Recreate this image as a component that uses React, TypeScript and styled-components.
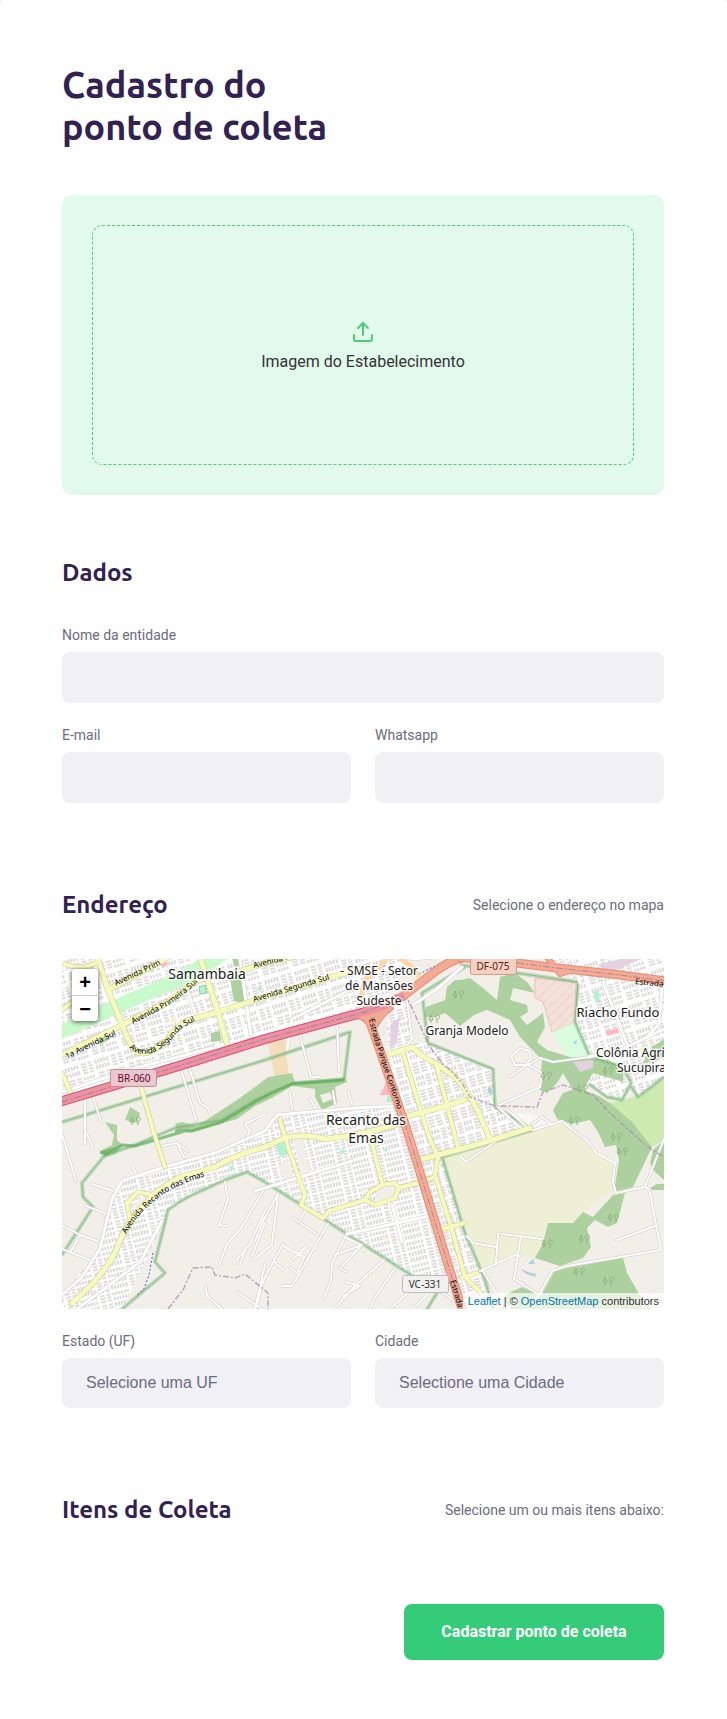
import React from 'react';
import styled, { createGlobalStyle } from 'styled-components';
import { Upload } from 'lucide-react';

const GlobalStyle = createGlobalStyle`
  * { box-sizing: border-box; margin: 0; padding: 0; }
  body {
    background: #f0f0f5;
    color: #6c6c80;
    font-family: Roboto, "Liberation Sans", sans-serif;
    font-size: 16px;
    -webkit-font-smoothing: antialiased;
  }
`;

const Form = styled.form`
  display: flex;
  flex-direction: column;
  background: #fff;
  border-radius: 4px 4px 0 0;
  padding: 64px 63px 59px 62px;
`;

const headingFont = 'Ubuntu, "Noto Sans", "Open Sans", sans-serif';

const Title = styled.h1`
  font: 700 36px/42px ${headingFont};
  color: #322153;
`;

const DropArea = styled.label`
  display: flex;
  height: 300px;
  margin-top: 47px;
  padding: 30px;
  background: #e1faec;
  border-radius: 10px;
  cursor: pointer;
`;

const DropTarget = styled.span`
  flex: 1;
  display: flex;
  flex-direction: column;
  align-items: center;
  justify-content: center;
  gap: 8px;
  border: 1px dashed #4ecb79;
  border-radius: 10px;
  color: #333;
  line-height: 19px;
  svg { color: #4ecb79; }
`;

const FileInput = styled.input`
  position: absolute;
  width: 1px;
  height: 1px;
  opacity: 0;
`;

const Section = styled.fieldset<{ $first?: boolean }>`
  min-width: 0;
  border: 0;
  margin-top: ${(p) => (p.$first ? 64 : 88)}px;
  display: flex;
  flex-direction: column;
  gap: 24px;
`;

const SectionHeader = styled.div`
  display: flex;
  align-items: center;
  justify-content: space-between;
  margin-bottom: 16px;
  font-size: 14px;
  line-height: 28px;
`;

const SectionTitle = styled.h2`
  font: 700 24px/28px ${headingFont};
  color: #322153;
`;

const FieldRow = styled.div`
  display: grid;
  grid-template-columns: 1fr 1fr;
  gap: 24px;
`;

const Field = styled.div`
  display: flex;
  flex-direction: column;
  gap: 8px;
  label { font-size: 14px; line-height: 17px; }
`;

const Input = styled.input`
  width: 100%;
  height: 51px;
  border: 0;
  border-radius: 8px;
  padding: 0 24px;
  background: #f0f0f5;
  color: #6c6c80;
  font: 400 16px/20px Roboto, sans-serif;
`;

const Select = styled.select`
  width: 100%;
  height: 50px;
  appearance: none;
  border: 0;
  border-radius: 8px;
  padding: 0 24px;
  background: #f0f0f5;
  color: #6c6c80;
  font: 400 16px/20px "Liberation Sans", Arial, sans-serif;
`;

const Submit = styled.button`
  align-self: flex-end;
  width: 260px;
  height: 56px;
  margin-top: 64px;
  border: 0;
  border-radius: 8px;
  background: #34cb79;
  color: #fff;
  font: 700 16px/20px Roboto, sans-serif;
  cursor: pointer;
`;

const MapFrame = styled.div`
  position: relative;
  height: 350px;
  overflow: hidden;
  border-radius: 8px;
  background: #f2efe9;
`;

const MapSvg = styled.svg`
  display: block;
  width: 100%;
  height: 100%;
  font-family: "Noto Sans", "Open Sans", sans-serif;
`;

const PlaceLabels = styled.g`
  fill: #222;
  paint-order: stroke;
  stroke: rgba(255, 255, 255, 0.75);
  stroke-width: 3px;
  stroke-linejoin: round;
`;

const StreetLabels = styled.g`
  fill: #000;
  font-size: 8px;
`;

const ZoomControl = styled.div`
  position: absolute;
  top: 10px;
  left: 10px;
  width: 26px;
  border-radius: 4px;
  box-shadow: 0 1px 5px rgba(0, 0, 0, 0.65);
  background: #fff;
  overflow: hidden;
`;

const ZoomButton = styled.button`
  display: block;
  width: 26px;
  height: 26px;
  border: 0;
  background: #fff;
  color: #000;
  font: 700 20px/26px "Liberation Sans", Arial, sans-serif;
  cursor: pointer;
  & + & { border-top: 1px solid #ccc; }
`;

const Attribution = styled.div`
  position: absolute;
  right: 0;
  bottom: 0;
  padding: 0 5px;
  background: rgba(255, 255, 255, 0.7);
  color: #333;
  font: 11px/16px "Liberation Sans", Arial, sans-serif;
  a { color: #0078a8; text-decoration: none; }
`;

type Line = { d: string; w?: number };

const yellowRoads: Line[] = [
  { d: 'M35 -2L45 28 61 68Q67 86 75 93 82 96 90 92L103 83Q114 68 124 62L156 53 203 38 276 16 305 8' },
  { d: 'M0 96L60 66 96 48Q112 40 126 28L143 18' },
  { d: 'M46 31L96 4 110 -4' },
  { d: 'M138 -2L156 53 166 88' },
  { d: 'M0 4Q20 12 36 3', w: 4 },
  { d: 'M0 51L14 40', w: 4 },
  { d: 'M0 114L9 135', w: 4 },
  { d: 'M173 14L203 4 236 -3' },
  { d: 'M79 128L91 171 103 208', w: 4 },
  { d: 'M10 344Q40 318 53 294 60 272 76 253L93 234 116 219Q140 212 153 208 170 197 203 188L223 179Q243 174 263 180 285 178 306 173L333 166 346 157 373 150 403 141', w: 5 },
  { d: 'M68 261L65 244 76 233 91 236', w: 4 },
  { d: 'M218 161L226 188 243 236 239 246 261 259 267 252 303 241 308 233 320 226 332 224 337 229 333 239 313 246 303 241', w: 4 },
  { d: 'M336 229L360 223 373 218M308 176L320 224', w: 4 },
  { d: 'M325 96L350 88Q360 98 373 104L393 118Q406 132 416 152L428 180', w: 5 },
  { d: 'M341 94L366 175 376 198 373 216 390 271 403 318 418 333', w: 4 },
  { d: 'M356 201L403 189 430 181 468 169', w: 5 },
  { d: 'M375 108L396 188M378 271L402 264M400 319L415 314', w: 4 },
];

const whiteRoads: Line[] = [
  { d: 'M23 137L23 185M31 137L39 163M119 110L129 144 134 161M127 107L138 144 146 149 149 157' },
  { d: 'M237 73L249 118 257 118M275 60L277 112M183 181L188 172 183 165 203 155' },
  { d: 'M228 134L230 150M248 140L254 150M271 132L273 145M286 132L290 145' },
  { d: 'M0 175L14 222M23 171L31 188M100 187L115 184 122 198M115 184L126 192M70 206L75 217M30 225L51 232' },
  { d: 'M0 266L18 276 35 282M24 247L45 255 43 262M0 290L30 302M18 276L9 292' },
  { d: 'M163 223L166 240 157 266 164 267M202 230L180 268 165 285 157 307M203 252L188 285 172 304M184 289L178 305M203 264L190 297' },
  { d: 'M144 328L145 337 160 350M175 333L200 350M203 305L193 350' },
  { d: 'M216 235L202 260 193 282M216 235L210 285 193 300M231 259L256 276M266 265L230 327 220 327M246 246L238 261' },
  { d: 'M221 285L202 320 194 348M221 287L242 298 236 312M213 303L221 311M231 300L244 288M228 309L238 316' },
  { d: 'M284 276L270 304 269 321 262 340M284 279L300 286 280 307M300 286L273 296M278 309L284 313' },
  { d: 'M322 301L293 327 275 347M284 323L298 327 281 337M333 309L312 340 308 350M348 332L330 348M355 346L372 328 400 347' },
  { d: 'M466 106L478 99 491 103 527 98M466 106L453 106 449 98 458 89 467 92 469 100 462 108 448 118M435 147L478 128 480 114 466 106' },
  { d: 'M435 147L457 168 471 171 500 162 512 172 526 182 534 194 553 204 551 222 554 234 583 228 602 180' },
  { d: 'M583 228L587 230 599 291 505 307 490 312 472 345M555 281L593 267M440 275L480 280M459 277L452 320 476 335' },
  { d: 'M398 197L404 203 436 181M405 277L411 284 434 288M436 275L434 303M418 312L453 296 458 297M421 312L433 332 448 350M591 332L581 348' },
  { d: 'M345 42L350 80 340 92M470 165L480 158 490 166M445 150L468 171' },
];

const widePaved: Line[] = [
  { d: 'M0 336L20 318 38 290 50 240 60 222 103 208 153 194 203 172 215 156 293 149 335 147' },
  { d: 'M15 350L78 303 100 262 M0 133L70 110 150 89' },
  { d: 'M350 0L385 -3M351 46L375 30 400 8M485 0L520 20M510 0L518 24M541 23L570 98M600 30L597 65 585 78' },
  { d: 'M526 98L560 90 602 70M330 245L340 283M193 232L290 202M285 275L372 256' },
  { d: 'M225 90L230 60 290 30M178 0L190 84M125 30L136 62' },
];

const urban: { d: string; fill: string }[] = [
  { d: 'M0 0H345L325 42 300 50 0 140Z', fill: 'url(#blocksA)' },
  { d: 'M325 50L345 38 350 84 366 84 433 112 433 148 471 171 380 198 430 350H398L346 181 326 98Z', fill: 'url(#blocksB)' },
  { d: 'M0 336L38 290 50 240 60 222 103 208 153 194 203 171 215 156 293 148 336 144 392 330 375 334 203 223 185 213 163 221 130 236 106 251 96 276 60 350H0Z', fill: 'url(#blocksC)' },
  { d: 'M485 0H602V118L578 138 570 125 560 140 545 138 527 123 526 117 560 116 560 108 530 98 513 63 518 26Z', fill: 'url(#blocksA)' },
  { d: 'M452 154L470 155 498 166 470 170Z', fill: '#f8f7f4' },
];

const woods = [
  'M63 161L68 148 78 154 75 164Z',
  'M43 163L55 166 55 181 61 186 54 195 42 199 38 192 50 186 52 176Z',
  'M113 165L120 163 135 167 175 141 193 128 206 118 230 114 233 123 283 118 285 123 273 128 275 144 260 151 253 138 253 130 230 127 210 139 193 147 175 160 150 167 130 173 115 171ZM258 136L268 133 271 140 261 144Z',
  'M398 21L408 19 421 29 435 41 438 18 453 14 465 23 473 34 451 29 448 41 465 46 466 53 458 58 465 66 481 54 483 68 475 83 485 91 508 98 545 101 561 108 561 123 531 114 525 124 521 134 511 131 501 114 495 124 485 134 478 131 480 101 458 78 448 61 425 51 412 56 398 67 390 60 383 54 374 58 363 58 364 48 383 41 385 28 393 21Z',
  'M491 151L501 134 515 129 535 136 548 144 571 164 590 188 571 228 552 233 557 201 554 186 543 188 535 171 528 161 510 165 495 160Z',
  'M486 264L511 264 521 253 531 258 551 236 563 234 555 264 546 268 533 261 525 269 529 288 521 299 498 307 473 299 481 284Z',
  'M493 311L561 299 565 314 580 340 590 350H468L480 335Z',
  'M443 336L460 328 475 335 478 350H440Z',
  'M591 191L602 181V221L593 213 588 204ZM588 229L595 225H602V231H590Z',
  'M590 88L602 80V98L580 105Z',
];

const reserveLines = [
  'M0 163L203 101 288 73 282 121 230 124 193 141 160 161 113 169 73 186 43 196 20 224 21 238 31 248 0 296',
  'M60 350L103 314 93 303 106 251Q116 243 130 236L163 221 185 213 203 223 260 259 346 314 376 332 364 352',
  'M403 8L360 34 366 84 431 110 433 148 471 171 380 198 403 274 423 321 431 350',
  'M398 6L455 14 516 23 513 63 528 98 560 108 570 125',
  'M527 125L545 138 560 141 568 126 576 138 602 118',
];

const boundaries = [
  'M343 34L368 88 380 104Q398 118 408 138L433 147 475 148 481 133 501 126 531 136 548 154 578 181 590 191 602 198',
  'M106 350L121 331 131 309 150 308 153 316 173 319 183 315 206 334V350',
];

const trees = [[484, 285], [521, 280], [550, 259], [516, 313], [545, 322], [511, 162], [553, 178], [559, 193], [483, 117], [519, 130], [545, 112], [395, 36], [371, 60], [72, 162]];

const Roads = ({ lines, width, casing, fill }: { lines: Line[]; width: number; casing: string; fill: string }) => (
  <g fill="none" strokeLinejoin="round" strokeLinecap="round">
    {lines.map((l) => <path key={l.d} d={l.d} stroke={casing} strokeWidth={(l.w ?? width) + 1} />)}
    {lines.map((l) => <path key={l.d} d={l.d} stroke={fill} strokeWidth={l.w ?? width} />)}
  </g>
);

const StreetMap = () => (
  <MapSvg viewBox="0 0 602 350" preserveAspectRatio="xMidYMid slice" role="img" aria-label="Mapa de Recanto das Emas">
    <defs>
      <pattern id="blocksA" width="31" height="26" patternUnits="userSpaceOnUse" patternTransform="rotate(-17)">
        <path fill="#fff" d="M0 0h31v26H0z" />
        <path stroke="#bebcb8" strokeWidth="1.1" fill="none" d="M2 2v4M5 2v4M8 2v4M11 2v4M14 2v4M2 8v4M5 8v4M8 8v4M11 8v4M14 8v4M18 3h5M18 6h5M18 9h5M18 12h5M25 3h4M25 6h4M25 9h4M25 12h4M2 16h6M2 19h6M2 22h6M10 16h5M10 19h5M10 22h5M18 16v3M21 16v3M24 16v3M27 16v3M18 21v3M21 21v3M24 21v3M27 21v3" />
      </pattern>
      <pattern id="blocksB" width="17" height="28" patternUnits="userSpaceOnUse" patternTransform="rotate(-16)">
        <path fill="#fff" d="M0 0h17v28H0z" />
        <path stroke="#bebcb8" strokeWidth="1.1" d="M1 2h6M1 5h6M1 8h6M1 11h6M9 2h6M9 5h6M9 8h6M9 11h6M2 15v4M5 15v4M8 15v4M2 21v4M5 21v4M8 21v4M11 16h5M11 19h5M11 22h5M11 25h5" />
      </pattern>
      <pattern id="blocksC" width="33" height="23" patternUnits="userSpaceOnUse" patternTransform="rotate(-14)">
        <path fill="#fff" d="M0 0h33v23H0z" />
        <path stroke="#bebcb8" strokeWidth="1.1" d="M2 1v4M5 1v4M8 1v4M11 1v4M14 1v4M17 1v4M2 7v4M5 7v4M8 7v4M11 7v4M14 7v4M17 7v4M2 14v3M5 14v3M8 14v3M11 14v3M14 14v3M17 14v3M2 19v3M5 19v3M8 19v3M11 19v3M14 19v3M17 19v3M21 2h5M21 5h5M21 8h5M21 11h5M21 15h5M21 18h5M21 21h5M28 2h4M28 5h4M28 8h4M28 11h4M28 15h4M28 18h4M28 21h4" />
      </pattern>
      <pattern id="military" width="7" height="7" patternUnits="userSpaceOnUse" patternTransform="rotate(45)">
        <path fill="#f2e0d9" d="M0 0h7v7H0z" /><path stroke="#f3c0ba" strokeWidth="1" d="M0 0v7" />
      </pattern>
      <path id="lblPrimeiraTop" d="M54 27L96 7 120 -6" />
      <path id="lblPrimeira" d="M71 65L98 51Q114 43 136 23" />
      <path id="lblUmA" d="M5 100L60 73" />
      <path id="lblSegunda" d="M67 89Q76 97 90 94 105 87 116 73 124 65 140 59" />
      <path id="lblSegundaE" d="M192 43L272 19" />
      <path id="lblTopE" d="M192 9L236 -2" />
      <path id="lblContorno" d="M307 60Q311 80 316 92L338 158" />
      <path id="lblRecanto" d="M64 275Q76 254 96 239 114 225 150 215" />
      <path id="lblEstradaS" d="M388 322L398 354" />
      <path id="lblEstradaE" d="M573 25L604 28" />
    </defs>

    <rect width="602" height="350" fill="#f2efe9" />
    <path fill="#eef0d5" d="M380 198L471 171 500 163 512 172 533 194 553 204 551 231 521 253 511 264 486 264 473 299 451 296 418 313 403 274Z" />
    <path fill="#cdebb0" d="M548 144L571 138 602 120V181L590 188 571 166Z" />
    <path fill="#f5dcba" d="M205 81L223 79 227 119 213 119Z" />
    <path fill="url(#military)" stroke="#f5bdb6" d="M473 19L516 23 513 63 490 73 481 43 473 39Z" />
    <path fill="#d9fbe0" d="M490 73L513 63 528 96 506 99Z" />
    {urban.map((u) => <path key={u.d} d={u.d} fill={u.fill} />)}
    <g fill="#add19e" fillRule="evenodd">{woods.map((d) => <path key={d} d={d} />)}</g>
    <path fill="#e4d0e0" d="M511 103L531 101 531 109 518 113ZM536 6L558 0 580 0 545 14ZM329 65L338 58 334 86 328 88Z" />

    <path fill="#c8facc" d="M0 65L40 46 100 20 150 -5H172L140 18 60 53 0 80Z" />
    <path fill="#add19e" d="M168 20L178 16 186 46 172 42ZM170 0L180 0 181 6 173 8ZM149 74L158 72 159 82 149 83ZM37 80L46 76 48 80 38 86Z" />
    <path fill="#b5f0d0" stroke="#7ed0a8" d="M137 28L143 26 145 34 138 35Z" />
    <path fill="#b5f0d0" d="M214 186L224 183 227 195 218 198ZM325 138L330 133 330 144 324 142ZM278 191L282 190 283 194 279 195ZM84 286L90 283 89 288 85 290ZM167 208L171 206 172 210 168 211ZM322 190L325 189 326 192 323 193ZM195 30L199 27 199 33ZM532 33L536 31 538 42 533 43ZM538 52L541 50 542 57 539 59ZM402 344L406 342 406 347ZM311 240L314 239 313 243Z" />
    <path fill="#ffb8c0" d="M320 132L326 120 328 136 317 136ZM544 72L556 69 557 74 545 77ZM98 3L103 0 106 5 100 9Z" />
    <path fill="#f8f4c0" d="M109 60L114 59 115 63 109 64ZM56 262L60 264 58 267ZM253 190L257 192 256 196ZM358 299L361 298 361 302ZM352 269L356 268 356 271ZM319 279L325 277 323 281ZM91 266L95 268 92 271ZM65 297L69 296 69 299ZM117 78L120 77 120 81ZM575 90L585 88 580 94ZM299 230L303 231 300 234Z" />
    <path fill="#f2efe9" d="M230 175L238 172 248 214 240 220ZM216 207L225 200 234 224 227 226ZM314 232L332 226 335 230 330 238 313 243ZM71 246L82 238 90 242 76 254Z" />
    <path fill="#aad3df" d="M459 310L466 313 474 315 473 318 463 314ZM466 305L471 300 473 305ZM426 128L430 130 429 137 426 133ZM511 83L515 81 514 86Z" />

    <g fill="none" strokeLinejoin="round">
      {reserveLines.map((d) => <path key={d} d={d} stroke="#8cc28c" strokeOpacity="0.5" strokeWidth="4" />)}
      {reserveLines.map((d) => <path key={d} d={d} stroke="#67a967" strokeOpacity="0.6" strokeWidth="1" />)}
      <path stroke="#5eae58" strokeOpacity="0.7" strokeWidth="3" d="M113 172L130 172 160 163 193 143 210 134 230 125 282 121M42 196L60 186 73 187 126 171M38 194L53 190" />
    </g>

    <Roads lines={whiteRoads} width={2} casing="#c9c7c3" fill="#fff" />
    <Roads lines={widePaved} width={3} casing="#cfcdca" fill="#fff" />
    <Roads lines={yellowRoads} width={5} casing="#c5c98f" fill="#f7fabf" />

    <g fill="none" stroke="#a98bb0" strokeOpacity="0.75" strokeWidth="1.5" strokeDasharray="6 2 2 2">
      {boundaries.map((d) => <path key={d} d={d} />)}
    </g>
    <path d="M91 294L87 316 82 330 75 336M322 6L321 16M357 15L385 1" fill="none" stroke="#5050f0" strokeWidth="1" strokeDasharray="2 2" />

    <g fill="none" strokeLinecap="butt" strokeLinejoin="round">
      <path stroke="#fcd6a4" strokeWidth="5" d="M301 46L300 32 304 20 318 8 326 -2M336 -2L350 8 357 18" />
      <path stroke="#e58a74" strokeWidth="9" d="M290 57Q302 52 309 66L325 112 345 171 388 312 402 356M300 54L340 38 366 18Q385 2 403 -2M296 55Q315 58 328 44M312 66Q318 54 330 46" />
      <path stroke="#dc4a75" strokeWidth="10" d="M-3 143L120 106 203 80 303 53" />
      <path stroke="#e892a2" strokeWidth="8" d="M-3 143L120 106 203 80 303 53" />
      <path stroke="#f4ab96" strokeWidth="7" d="M290 57Q302 52 309 66L325 112 345 171 388 312 402 356M300 54L340 38 366 18Q385 2 403 -2M296 55Q315 58 328 44M312 66Q318 54 330 46" />
      <path stroke="#e892a2" strokeWidth="7" d="M285 58L320 48 342 37" />
      <path stroke="#e58a74" strokeWidth="9" d="M395 -2L455 4 495 9 550 15 604 22" />
      <path stroke="#e58a74" strokeWidth="6" d="M485 -2L498 15 508 12" />
      <path stroke="#f4ab96" strokeWidth="7" d="M395 -2L455 4 495 9 550 15 604 22" />
      <path stroke="#f4ab96" strokeWidth="4" d="M485 -2L498 15 508 12" />
      <path stroke="#9d718f" strokeOpacity="0.7" strokeWidth="1" strokeDasharray="7 2 2 2" d="M0 143L120 106 203 80 303 53 342 37M310 66L325 112 345 171 388 312 402 356M455 4L495 9 550 15 604 22" />
    </g>

    <g fill="none" stroke="#8bb37c" strokeWidth="1">
      {trees.map(([x, y]) => (
        <path key={`${x}-${y}`} d={`M${x - 2} ${y + 4}v-3h-2l2-5 2 5h-2M${x + 4} ${y + 4}v-4a2 2 0 1 1 1 0`} />
      ))}
    </g>

    <StreetLabels>
      <text><textPath href="#lblPrimeiraTop">Avenida Prim</textPath></text>
      <text><textPath href="#lblPrimeira">Avenida Primeira Sul</textPath></text>
      <text><textPath href="#lblUmA">1a Avenida Sul</textPath></text>
      <text><textPath href="#lblSegunda">Avenida Segunda Sul</textPath></text>
      <text><textPath href="#lblSegundaE">Avenida Segunda Sul</textPath></text>
      <text><textPath href="#lblTopE">Avenida P</textPath></text>
      <text><textPath href="#lblContorno">Estrada Parque Contorno</textPath></text>
      <text><textPath href="#lblRecanto">Avenida Recanto das Emas</textPath></text>
      <text><textPath href="#lblEstradaS">Estrada</textPath></text>
      <text><textPath href="#lblEstradaE">Estrada</textPath></text>
    </StreetLabels>

    <PlaceLabels textAnchor="middle" fontSize="12">
      <text x="317" y="16">- SMSE - Setor</text>
      <text x="317" y="31">de Mansões</text>
      <text x="317" y="46">Sudeste</text>
      <text x="405" y="76">Granja Modelo</text>
      <text x="556" y="58" fontSize="13">Riacho Fundo</text>
      <text x="145" y="20" fontSize="14">Samambaia</text>
      <text x="304" y="166" fontSize="14">Recanto das</text>
      <text x="304" y="184" fontSize="14">Emas</text>
      <text x="534" y="98" textAnchor="start">Colônia Agrí</text>
      <text x="555" y="113" textAnchor="start">Sucupira</text>
    </PlaceLabels>

    <g fontSize="10" textAnchor="middle">
      <rect x="48.5" y="110.5" width="46" height="17" rx="2" fill="#ebc8d0" stroke="#c98a9a" />
      <text x="72" y="123" fill="#620728">BR-060</text>
      <rect x="408.5" y="-1.5" width="46" height="17" rx="2" fill="#f5d0c4" stroke="#d99a88" />
      <text x="431" y="11" fill="#5c2211">DF-075</text>
      <rect x="340.5" y="316.5" width="46" height="17" rx="2" fill="#f0f0f0" stroke="#bdbdbd" />
      <text x="363" y="329" fill="#333">VC-331</text>
    </g>
  </MapSvg>
);

export default function App() {
  return (
    <>
      <GlobalStyle />
      <Form>
        <Title>Cadastro do<br />ponto de coleta</Title>

        <DropArea>
          <FileInput type="file" accept="image/*" />
          <DropTarget>
            <Upload size={24} aria-hidden />
            Imagem do Estabelecimento
          </DropTarget>
        </DropArea>

        <Section $first>
          <SectionHeader><SectionTitle>Dados</SectionTitle></SectionHeader>
          <Field>
            <label htmlFor="name">Nome da entidade</label>
            <Input id="name" type="text" />
          </Field>
          <FieldRow>
            <Field>
              <label htmlFor="email">E-mail</label>
              <Input id="email" type="email" />
            </Field>
            <Field>
              <label htmlFor="whatsapp">Whatsapp</label>
              <Input id="whatsapp" type="text" />
            </Field>
          </FieldRow>
        </Section>

        <Section>
          <SectionHeader>
            <SectionTitle>Endereço</SectionTitle>
            <span>Selecione o endereço no mapa</span>
          </SectionHeader>
          <MapFrame>
            <StreetMap />
            <ZoomControl>
              <ZoomButton type="button" aria-label="Zoom in">+</ZoomButton>
              <ZoomButton type="button" aria-label="Zoom out">−</ZoomButton>
            </ZoomControl>
            <Attribution>
              <a href="https://leafletjs.com">Leaflet</a> | © <a href="https://www.openstreetmap.org/copyright">OpenStreetMap</a> contributors
            </Attribution>
          </MapFrame>
          <FieldRow>
            <Field>
              <label htmlFor="uf">Estado (UF)</label>
              <Select id="uf"><option>Selecione uma UF</option></Select>
            </Field>
            <Field>
              <label htmlFor="city">Cidade</label>
              <Select id="city"><option>Selectione uma Cidade</option></Select>
            </Field>
          </FieldRow>
        </Section>

        <Section>
          <SectionHeader>
            <SectionTitle>Itens de Coleta</SectionTitle>
            <span>Selecione um ou mais itens abaixo:</span>
          </SectionHeader>
        </Section>

        <Submit type="submit">Cadastrar ponto de coleta</Submit>
      </Form>
    </>
  );
}
